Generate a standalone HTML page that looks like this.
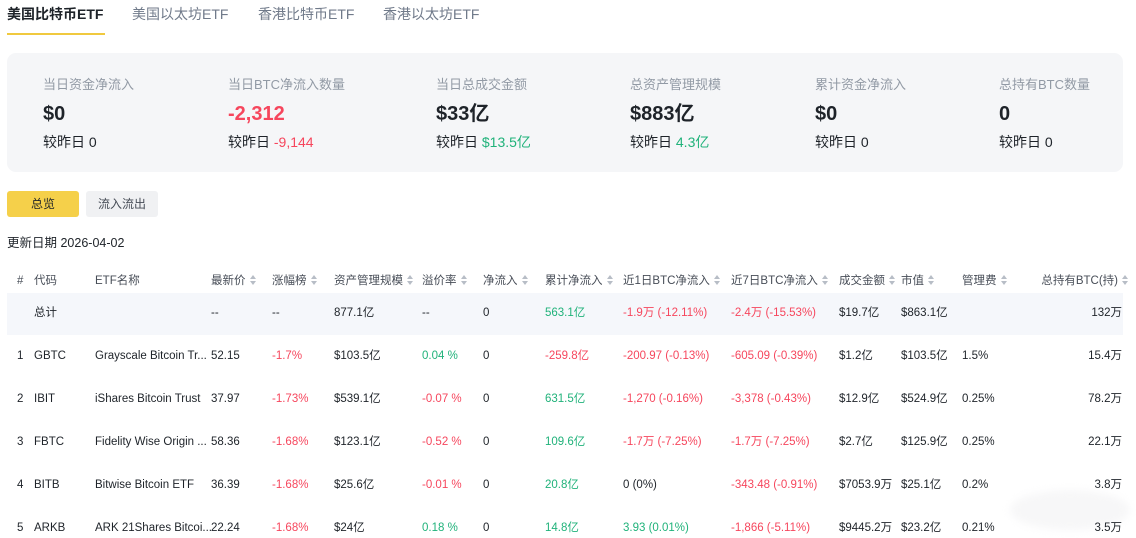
<!DOCTYPE html>
<html><head><meta charset="utf-8"><style>
*{margin:0;padding:0;box-sizing:border-box}
body{width:1136px;height:537px;overflow:hidden;background:#fff;font-family:"Liberation Sans","Noto Sans CJK SC",sans-serif;color:#1e2329;position:relative}
.a{position:absolute;white-space:nowrap}
.tab{top:4px;font-size:14px;line-height:20px;color:#707a8a}
.card{left:7px;top:53px;width:1116px;height:119px;background:#f5f6f8;border-radius:9px}
.lb{top:76px;font-size:13px;color:#929aa5;line-height:18px}
.vl{top:101px;font-size:20px;font-weight:bold;line-height:26px}
.sb{top:132px;font-size:14px;line-height:20px}
.r{color:#f6465d}.g{color:#20b27a}
.row{position:absolute;left:0;width:1136px;height:20px;font-size:11.5px;line-height:20px}
.row span{position:absolute;white-space:nowrap}
.hd{color:#474d57}
.s{display:inline-block;margin-left:4px;vertical-align:-1px}
</style></head><body>
<svg width="0" height="0" style="position:absolute"><symbol id="st" viewBox="0 0 6 10"><path d="M3 0L6 4H0z M3 10L6 6H0z" fill="#b7bdc6"/></symbol></svg>
<div class="a tab" style="left:7px;color:#1e2329;font-weight:bold">美国比特币ETF</div>
<div class="a" style="left:7px;top:33px;width:98px;height:2px;background:#f0c93f"></div>
<div class="a tab" style="left:132px">美国以太坊ETF</div>
<div class="a tab" style="left:258px">香港比特币ETF</div>
<div class="a tab" style="left:383px">香港以太坊ETF</div>

<div class="a card"></div>
<div class="a lb" style="left:43px">当日资金净流入</div>
<div class="a vl" style="left:43px">$0</div>
<div class="a sb" style="left:43px">较昨日 0</div>
<div class="a lb" style="left:228px">当日BTC净流入数量</div>
<div class="a vl r" style="left:228px">-2,312</div>
<div class="a sb" style="left:228px">较昨日 <span class="r">-9,144</span></div>
<div class="a lb" style="left:436px">当日总成交金额</div>
<div class="a vl" style="left:436px">$33亿</div>
<div class="a sb" style="left:436px">较昨日 <span class="g">$13.5亿</span></div>
<div class="a lb" style="left:630px">总资产管理规模</div>
<div class="a vl" style="left:630px">$883亿</div>
<div class="a sb" style="left:630px">较昨日 <span class="g">4.3亿</span></div>
<div class="a lb" style="left:815px">累计资金净流入</div>
<div class="a vl" style="left:815px">$0</div>
<div class="a sb" style="left:815px">较昨日 0</div>
<div class="a lb" style="left:999px">总持有BTC数量</div>
<div class="a vl" style="left:999px">0</div>
<div class="a sb" style="left:999px">较昨日 0</div>

<div class="a" style="left:7px;top:191px;width:72px;height:26px;background:#f5d04a;border-radius:3px;font-size:12px;line-height:26px;text-align:center">总览</div>
<div class="a" style="left:86px;top:191px;width:72px;height:26px;background:#f0f1f3;border-radius:3px;font-size:12px;line-height:26px;text-align:center;color:#474d57">流入流出</div>
<div class="a" style="left:7px;top:234px;font-size:12.5px;line-height:18px">更新日期 2026-04-02</div>

<div class="row hd" style="top:271px">
<span style="left:17px">#</span><span style="left:34px">代码</span><span style="left:95px">ETF名称</span>
<span style="left:211px">最新价<svg class="s" width="6" height="10"><use href="#st"/></svg></span><span style="left:272px">涨幅榜<svg class="s" width="6" height="10"><use href="#st"/></svg></span>
<span style="left:334px">资产管理规模<svg class="s" width="6" height="10"><use href="#st"/></svg></span><span style="left:422px">溢价率<svg class="s" width="6" height="10"><use href="#st"/></svg></span>
<span style="left:483px">净流入<svg class="s" width="6" height="10"><use href="#st"/></svg></span><span style="left:545px">累计净流入<svg class="s" width="6" height="10"><use href="#st"/></svg></span>
<span style="left:623px">近1日BTC净流入<svg class="s" width="6" height="10"><use href="#st"/></svg></span><span style="left:731px">近7日BTC净流入<svg class="s" width="6" height="10"><use href="#st"/></svg></span>
<span style="left:839px">成交金额<svg class="s" width="6" height="10"><use href="#st"/></svg></span><span style="left:901px">市值<svg class="s" width="6" height="10"><use href="#st"/></svg></span>
<span style="left:962px">管理费<svg class="s" width="6" height="10"><use href="#st"/></svg></span><span style="right:8px">总持有BTC(持)<svg class="s" width="6" height="10"><use href="#st"/></svg></span>
</div>
<div class="a" style="left:7px;top:293px;width:1116px;height:42px;background:#f5f7fb"></div>
<div class="row" style="top:303px">
<span style="left:34px">总计</span><span style="left:211px">--</span><span style="left:272px">--</span><span style="left:334px">877.1亿</span><span style="left:422px">--</span><span style="left:483px">0</span><span class="g" style="left:545px">563.1亿</span><span class="r" style="left:623px">-1.9万 (-12.11%)</span><span class="r" style="left:731px">-2.4万 (-15.53%)</span><span style="left:839px">$19.7亿</span><span style="left:901px">$863.1亿</span><span style="right:14px">132万</span>
</div>
<div class="row" style="top:346px">
<span style="left:17px">1</span><span style="left:34px">GBTC</span><span style="left:95px">Grayscale Bitcoin Tr...</span><span style="left:211px">52.15</span><span class="r" style="left:272px">-1.7%</span><span style="left:334px">$103.5亿</span><span class="g" style="left:422px">0.04 %</span><span style="left:483px">0</span><span class="r" style="left:545px">-259.8亿</span><span class="r" style="left:623px">-200.97 (-0.13%)</span><span class="r" style="left:731px">-605.09 (-0.39%)</span><span style="left:839px">$1.2亿</span><span style="left:901px">$103.5亿</span><span style="left:962px">1.5%</span><span style="right:14px">15.4万</span>
</div>
<div class="row" style="top:389px">
<span style="left:17px">2</span><span style="left:34px">IBIT</span><span style="left:95px">iShares Bitcoin Trust</span><span style="left:211px">37.97</span><span class="r" style="left:272px">-1.73%</span><span style="left:334px">$539.1亿</span><span class="r" style="left:422px">-0.07 %</span><span style="left:483px">0</span><span class="g" style="left:545px">631.5亿</span><span class="r" style="left:623px">-1,270 (-0.16%)</span><span class="r" style="left:731px">-3,378 (-0.43%)</span><span style="left:839px">$12.9亿</span><span style="left:901px">$524.9亿</span><span style="left:962px">0.25%</span><span style="right:14px">78.2万</span>
</div>
<div class="row" style="top:432px">
<span style="left:17px">3</span><span style="left:34px">FBTC</span><span style="left:95px">Fidelity Wise Origin ...</span><span style="left:211px">58.36</span><span class="r" style="left:272px">-1.68%</span><span style="left:334px">$123.1亿</span><span class="r" style="left:422px">-0.52 %</span><span style="left:483px">0</span><span class="g" style="left:545px">109.6亿</span><span class="r" style="left:623px">-1.7万 (-7.25%)</span><span class="r" style="left:731px">-1.7万 (-7.25%)</span><span style="left:839px">$2.7亿</span><span style="left:901px">$125.9亿</span><span style="left:962px">0.25%</span><span style="right:14px">22.1万</span>
</div>
<div class="row" style="top:475px">
<span style="left:17px">4</span><span style="left:34px">BITB</span><span style="left:95px">Bitwise Bitcoin ETF</span><span style="left:211px">36.39</span><span class="r" style="left:272px">-1.68%</span><span style="left:334px">$25.6亿</span><span class="r" style="left:422px">-0.01 %</span><span style="left:483px">0</span><span class="g" style="left:545px">20.8亿</span><span style="left:623px">0 (0%)</span><span class="r" style="left:731px">-343.48 (-0.91%)</span><span style="left:839px">$7053.9万</span><span style="left:901px">$25.1亿</span><span style="left:962px">0.2%</span><span style="right:14px">3.8万</span>
</div>
<div class="a" style="left:1010px;top:490px;width:120px;height:40px;border-radius:50%;background:#f7f7f8;filter:blur(4px)"></div>
<div class="row" style="top:518px">
<span style="left:17px">5</span><span style="left:34px">ARKB</span><span style="left:95px">ARK 21Shares Bitcoi...</span><span style="left:211px">22.24</span><span class="r" style="left:272px">-1.68%</span><span style="left:334px">$24亿</span><span class="g" style="left:422px">0.18 %</span><span style="left:483px">0</span><span class="g" style="left:545px">14.8亿</span><span class="g" style="left:623px">3.93 (0.01%)</span><span class="r" style="left:731px">-1,866 (-5.11%)</span><span style="left:839px">$9445.2万</span><span style="left:901px">$23.2亿</span><span style="left:962px">0.21%</span><span style="right:14px">3.5万</span>
</div>
</body></html>
